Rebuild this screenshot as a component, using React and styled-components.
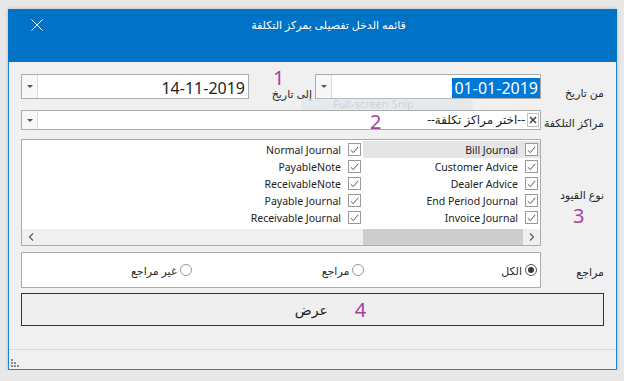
import React from "react";
import styled, { createGlobalStyle } from "styled-components";

const GlobalStyle = createGlobalStyle`
  html, body { margin: 0; padding: 0; }
  body {
    background: #e8e8e8;
    font-family: "Noto Sans", "DejaVu Sans", sans-serif;
    color: #1e1e1e;
  }
  * { box-sizing: border-box; }
`;

const PURPLE = "#a3439f";
const LINE = "#acacac";

const Window = styled.div`
  position: relative;
  margin: 9px 0 0 8px;
  width: 609px;
  height: 361px;
  display: flex;
  flex-direction: column;
  background: #f0f0f0;
  border: 1px solid #1a80d6;
  border-top: 0;
  box-shadow: 0 0 4px rgba(0, 0, 0, 0.2);
`;

const TitleBar = styled.div`
  height: 53px;
  margin: 0 -1px;
  background: #0173c7;
  display: flex;
  align-items: flex-start;
  color: #fff;
`;

const CloseBtn = styled.div`
  width: 58px;
  height: 32px;
  display: flex;
  align-items: center;
  justify-content: center;
`;

const Title = styled.div`
  flex: 1;
  height: 32px;
  line-height: 32px;
  text-align: center;
  padding-right: 26px;
  font-size: 11px;
`;

const Body = styled.div`
  flex: 1;
  padding: 12px 12px 0 12px;
`;

const Row = styled.div`
  position: relative;
  display: grid;
  grid-template-columns: 520px 63px;
  height: ${(p) => p.$h}px;
  margin-top: ${(p) => p.$gap || 0}px;
`;

const LabelCol = styled.div`
  display: flex;
  flex-direction: column;
  padding-top: ${(p) => p.$pt}px;
`;

const Label = styled.div`
  direction: rtl;
  text-align: right;
  font-size: 11px;
  line-height: 14px;
  white-space: nowrap;
  color: #2a2a2a;
  padding-right: ${(p) => p.$pr || 0}px;
  padding-top: ${(p) => p.$pt || 0}px;
`;

const Marker = styled.div`
  font-size: 20px;
  line-height: 14px;
  color: ${PURPLE};
  padding-left: ${(p) => p.$left || 0}px;
  margin-top: ${(p) => p.$top || 0}px;
`;

const FloatMarker = styled(Marker)`
  position: absolute;
  left: ${(p) => p.$x}px;
  top: ${(p) => p.$y}px;
  padding: 0;
  margin: 0;
`;

const DateLine = styled.div`
  display: flex;
`;

const Combo = styled.div`
  display: flex;
  height: ${(p) => p.$h}px;
  width: ${(p) => (p.$w ? `${p.$w}px` : "auto")};
  flex: ${(p) => (p.$w ? "none" : 1)};
  border: 1px solid ${LINE};
  background: #fff;
`;

const DropBtn = styled.div`
  width: 16px;
  flex: none;
  border-right: 1px solid #dcdcdc;
  background: #f7f7f7;
  display: flex;
  align-items: center;
  justify-content: center;
  &::after {
    content: "";
    border-left: 3px solid transparent;
    border-right: 3px solid transparent;
    border-top: 3px solid #555;
  }
`;

const DateValue = styled.div`
  flex: 1;
  text-align: right;
  padding-top: 2px;
`;

const DateText = styled.span`
  display: inline-block;
  font-size: 16px;
  line-height: 20px;
  padding: 0 ${(p) => (p.$selected ? 2 : 3)}px;
  background: ${(p) => (p.$selected ? "#0078d7" : "transparent")};
  color: ${(p) => (p.$selected ? "#fff" : "#1e1e1e")};
`;

const MidSlot = styled.div`
  width: 66px;
  display: flex;
  flex-direction: column;
`;

const ComboText = styled.div`
  flex: 1;
  direction: rtl;
  text-align: right;
  font-size: 12px;
  line-height: 18px;
  padding-right: 2px;
`;

const ClearBtn = styled.div`
  width: 12px;
  height: 14px;
  margin: 2px 1px 0 0;
  border: 1px solid #c4c4c4;
  display: flex;
  align-items: center;
  justify-content: center;
`;

const CheckList = styled.div`
  height: 100%;
  display: flex;
  flex-direction: column;
  border: 1px solid ${LINE};
  background: #fff;
`;

const ListArea = styled.div`
  flex: 1;
  display: grid;
  direction: rtl;
  grid-auto-flow: column;
  grid-template-rows: repeat(5, 17px);
  grid-auto-columns: 177px;
  padding-top: 1px;
`;

const Item = styled.div`
  display: flex;
  align-items: center;
  gap: 7px;
  padding-right: 2px;
  background: ${(p) => (p.$active ? "#e5e5e5" : "transparent")};
  font-size: 10.5px;
  color: #222;
  white-space: nowrap;
`;

const Box = styled.span`
  width: 13px;
  height: 13px;
  flex: none;
  border: 1px solid #999;
  background: #fff;
  display: flex;
  align-items: center;
  justify-content: center;
`;

const HScroll = styled.div`
  height: 16px;
  display: flex;
  background: #f0f0f0;
`;

const ScrollArrow = styled.div`
  width: 17px;
  display: flex;
  align-items: center;
  justify-content: center;
`;

const Track = styled.div`
  flex: 1;
  display: flex;
  justify-content: flex-end;
`;

const Thumb = styled.div`
  width: 160px;
  background: #cdcdcd;
`;

const RadioGroup = styled.div`
  height: 100%;
  display: grid;
  grid-template-columns: repeat(3, 1fr);
  direction: rtl;
  border: 1px solid ${LINE};
  background: #fff;
`;

const RadioItem = styled.label`
  display: flex;
  align-items: center;
  gap: 3px;
  padding-right: 3px;
  font-size: 11px;
  color: #2a2a2a;
`;

const Radio = styled.span`
  width: 12px;
  height: 12px;
  border-radius: 50%;
  border: 1px solid ${(p) => (p.$on ? "#555" : "#999")};
  display: flex;
  align-items: center;
  justify-content: center;
  &::after {
    content: "";
    width: 6px;
    height: 6px;
    border-radius: 50%;
    background: ${(p) => (p.$on ? "#3a3a3a" : "transparent")};
  }
`;

const ShowButton = styled.button`
  width: 100%;
  height: 33px;
  margin-top: 5px;
  display: flex;
  align-items: center;
  justify-content: center;
  gap: 27px;
  padding: 0 0 0 36px;
  border: 1px solid #333;
  background: #efefef;
  font-family: inherit;
  font-size: 14px;
  color: #1e1e1e;
`;

const ButtonMarker = styled.span`
  font-size: 20px;
  color: ${PURPLE};
`;

const StatusBar = styled.div`
  height: 20px;
  border-top: 1px solid #d9d9d9;
  display: flex;
  align-items: flex-end;
  padding: 0 0 2px 2px;
`;

const SnipGhost = styled.div`
  position: absolute;
  left: 292px;
  top: 89px;
  width: 172px;
  height: 12px;
  background: rgba(205, 222, 240, 0.3);
  color: rgba(110, 110, 110, 0.22);
  font-size: 11px;
  line-height: 12px;
  padding-left: 32px;
  white-space: nowrap;
`;

const Check = () => (
  <svg width="9" height="8" viewBox="0 0 9 8">
    <path d="M0.8 4.2 L3.3 6.6 L8.2 0.8" fill="none" stroke="#555" strokeWidth="1" />
  </svg>
);

const items = [
  "Bill Journal",
  "Customer Advice",
  "Dealer Advice",
  "End Period Journal",
  "Invoice Journal",
  "Normal Journal",
  "PayableNote",
  "ReceivableNote",
  "Payable Journal",
  "Receivable Journal",
];

const radios = [
  { text: "الكل", on: true },
  { text: "مراجع", on: false },
  { text: "غير مراجع", on: false },
];

export default function App() {
  return (
    <>
      <GlobalStyle />
      <Window>
        <TitleBar>
          <CloseBtn>
            <svg width="12" height="12" viewBox="0 0 12 12">
              <path d="M0.5 0.5 L11.5 11.5 M11.5 0.5 L0.5 11.5" stroke="#fff" strokeWidth="1" />
            </svg>
          </CloseBtn>
          <Title dir="rtl">قائمه الدخل تفصيلى بمركز التكلفة</Title>
        </TitleBar>

        <Body>
          <Row $h={25}>
            <DateLine>
              <Combo $w={228} $h={25}>
                <DropBtn />
                <DateValue>
                  <DateText>14-11-2019</DateText>
                </DateValue>
              </Combo>
              <MidSlot>
                <Marker $left={24} $top={-3}>1</Marker>
                <Label $pr={3} $pt={2}>إلى تاريخ</Label>
              </MidSlot>
              <Combo $h={25}>
                <DropBtn />
                <DateValue>
                  <DateText $selected>01-01-2019</DateText>
                </DateValue>
              </Combo>
            </DateLine>
            <LabelCol $pt={12}>
              <Label>من تاريخ</Label>
            </LabelCol>
          </Row>

          <Row $h={20} $gap={11}>
            <Combo $h={20}>
              <DropBtn />
              <ComboText>--اختر مراكز تكلفة--</ComboText>
              <ClearBtn>
                <svg width="8" height="8" viewBox="0 0 8 8">
                  <path d="M1 1 L7 7 M7 1 L1 7" stroke="#444" strokeWidth="1.6" />
                </svg>
              </ClearBtn>
            </Combo>
            <FloatMarker $x={349} $y={5}>2</FloatMarker>
            <LabelCol $pt={6}>
              <Label>مراكز التلكفة</Label>
            </LabelCol>
          </Row>

          <Row $h={107} $gap={9}>
            <CheckList>
              <ListArea>
                {items.map((t, i) => (
                  <Item key={t} $active={i === 0}>
                    <Box>
                      <Check />
                    </Box>
                    <span dir="ltr">{t}</span>
                  </Item>
                ))}
              </ListArea>
              <HScroll>
                <ScrollArrow>
                  <svg width="6" height="8" viewBox="0 0 6 8">
                    <path d="M5 0.5 L1.5 4 L5 7.5" fill="none" stroke="#606060" strokeWidth="1.3" />
                  </svg>
                </ScrollArrow>
                <Track>
                  <Thumb />
                </Track>
                <ScrollArrow>
                  <svg width="6" height="8" viewBox="0 0 6 8">
                    <path d="M1 0.5 L4.5 4 L1 7.5" fill="none" stroke="#606060" strokeWidth="1.3" />
                  </svg>
                </ScrollArrow>
              </HScroll>
            </CheckList>
            <LabelCol $pt={49}>
              <Label>نوع القيود</Label>
              <Marker $left={32} $top={7}>3</Marker>
            </LabelCol>
          </Row>

          <Row $h={36} $gap={6}>
            <RadioGroup>
              {radios.map((r) => (
                <RadioItem key={r.text}>
                  <Radio $on={r.on} />
                  <span>{r.text}</span>
                </RadioItem>
              ))}
            </RadioGroup>
            <LabelCol $pt={13}>
              <Label>مراجع</Label>
            </LabelCol>
          </Row>

          <ShowButton>
            <span>عرض</span>
            <ButtonMarker>4</ButtonMarker>
          </ShowButton>
        </Body>

        <StatusBar>
          <svg width="8" height="8" viewBox="0 0 8 8">
            <g fill="#8a8a8a">
              <rect x="0" y="0" width="2" height="2" />
              <rect x="0" y="3" width="2" height="2" />
              <rect x="3" y="3" width="2" height="2" />
              <rect x="0" y="6" width="2" height="2" />
              <rect x="3" y="6" width="2" height="2" />
              <rect x="6" y="6" width="2" height="2" />
            </g>
          </svg>
        </StatusBar>

        <SnipGhost>Full-screen Snip</SnipGhost>
      </Window>
    </>
  );
}
